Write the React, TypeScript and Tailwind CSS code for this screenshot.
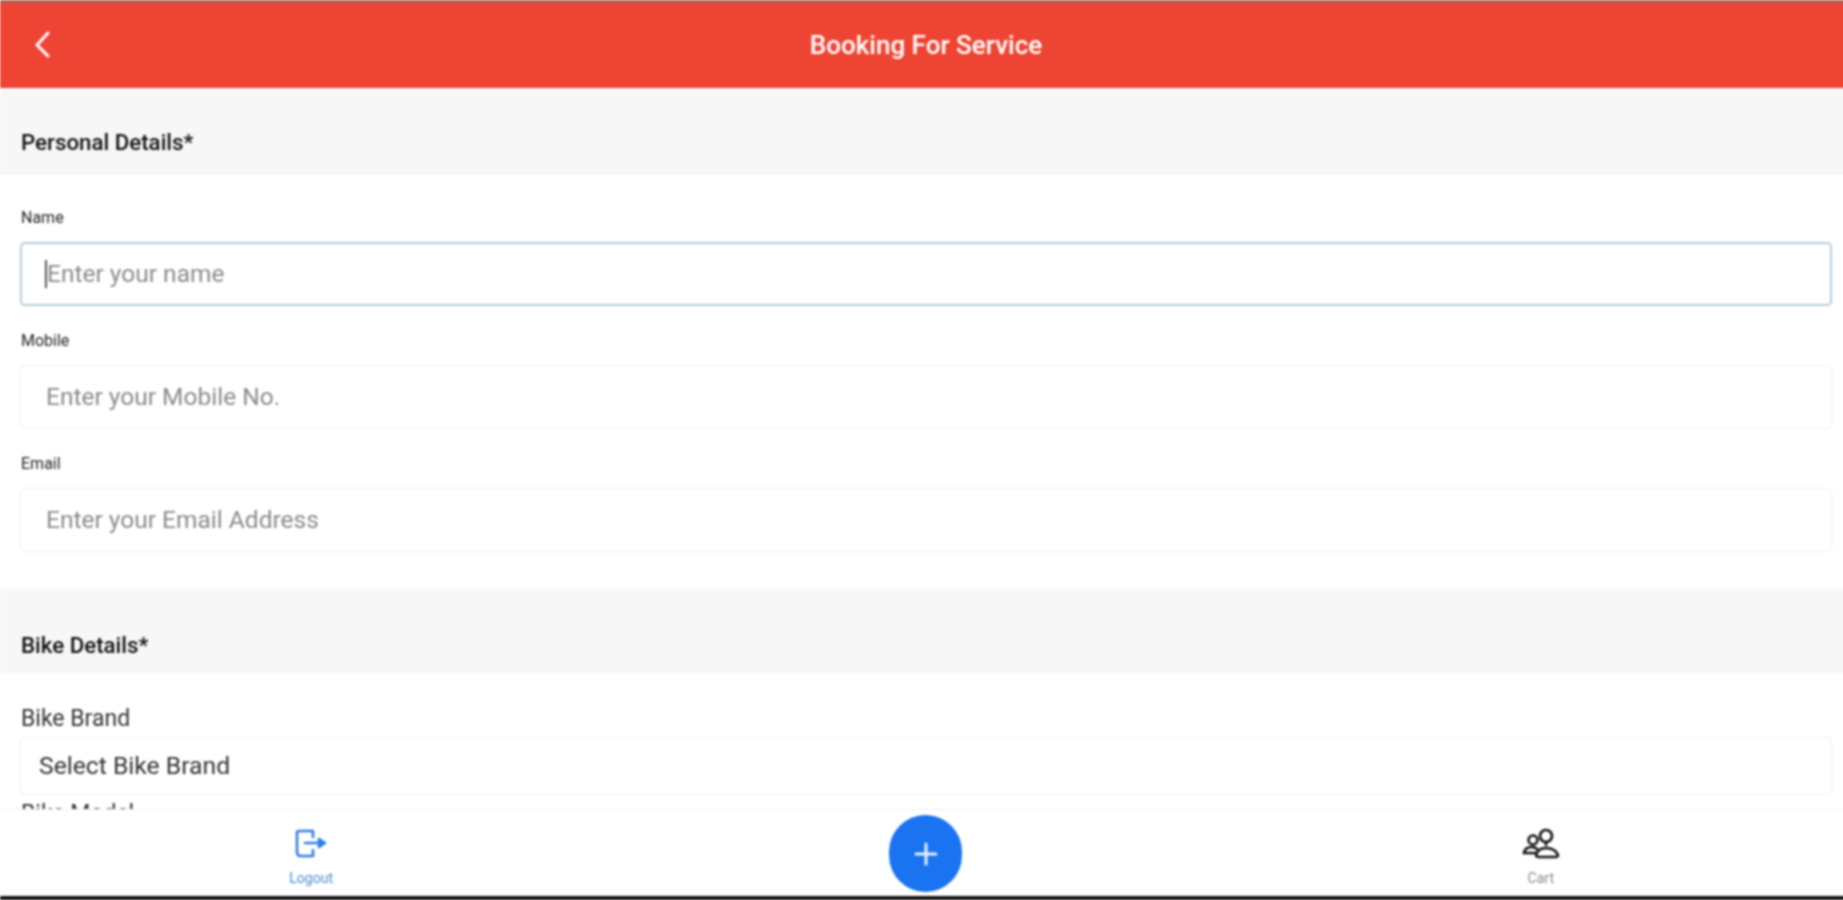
export default function App() {
  const Field = ({ label, placeholder, focused }: { label: string; placeholder: string; focused?: boolean }) => (
    <div>
      <div className="flex h-[59px] items-end pb-[14px] pl-[1px] text-[16px] leading-[20px] text-[#222]">{label}</div>
      <div
        className={
          focused
            ? "flex h-[64px] items-center rounded-[5px] border-2 border-[#b4ccd8] bg-white pl-[23px] text-[24.5px] text-[#8a8a8a]"
            : "flex h-[64px] items-center rounded-[5px] border border-[#f0f0f0] bg-white pl-[25px] text-[24.5px] text-[#8a8a8a]"
        }
      >
        {focused && <span className="h-[28px] w-[2px] bg-[#555]" />}
        {placeholder}
      </div>
    </div>
  );

  return (
    <div className="h-[900px] w-full overflow-hidden bg-white">
      <div className="flex h-[900px] w-[1852px] flex-col bg-white font-['Roboto',sans-serif] blur-[0.8px]">
        <header className="relative flex h-[88px] shrink-0 items-center justify-center border-t-4 border-[#bd5a4a] bg-[#ee4433] pb-[2px]">
          <svg className="absolute left-[32px] top-[26px]" width="22" height="30" viewBox="0 0 22 30" fill="none" stroke="white" strokeWidth="3" strokeLinecap="round" strokeLinejoin="round">
            <path d="M16 3 L5 15 L16 26" />
          </svg>
          <h1 className="text-[26px] font-medium text-white">Booking For Service</h1>
        </header>

        <main className="min-h-0 flex-1 overflow-hidden">
          <section className="flex h-[86px] items-end border-b border-[#efefef] bg-[#f7f7f7] px-[21px] pb-[18px]">
            <h2 className="text-[22.3px] font-medium leading-[26px] text-[#111]">Personal Details*</h2>
          </section>
          <div className="flex flex-col px-[20px] pt-[9px]">
            <Field label="Name" placeholder="Enter your name" focused />
            <Field label="Mobile" placeholder="Enter your Mobile No." />
            <Field label="Email" placeholder="Enter your Email Address" />
          </div>
          <section className="mt-[36px] flex h-[84px] items-end border-b border-[#efefef] bg-[#f7f7f7] px-[21px] pb-[13px]">
            <h2 className="text-[22.3px] font-medium leading-[26px] text-[#111]">Bike Details*</h2>
          </section>
          <div className="px-[20px] pt-[34px]">
            <div className="h-[26px] pl-[1px] text-[23px] leading-[26px] text-[#333]">Bike Brand</div>
            <div className="mt-[5px] flex h-[58px] items-center rounded-[5px] border border-[#eeeeee] bg-white pl-[18px] text-[24.7px] text-[#333]">
              Select Bike Brand
            </div>
            <div className="mt-[6px] pl-[1px] text-[23px] leading-[26px] text-[#333]">Bike Model</div>
          </div>
        </main>

        <nav className="grid h-[87px] shrink-0 grid-cols-3 border-t border-[#efefef] bg-white">
          <div className="flex flex-col items-center pl-[5px] pt-[18px]">
            <svg width="34" height="32" viewBox="0 0 34 32" fill="none" stroke="#2f7fe0" strokeWidth="2.6" strokeLinejoin="round" strokeLinecap="round">
              <path d="M19 9 V3 H5 Q3 3 3 5 V24 Q3 28 7 28 H19 V22" />
              <path d="M11 15 H28" />
              <path d="M25 11 L31 15 L25 19 Z" fill="#2f7fe0" />
            </svg>
            <span className="mt-[9px] text-[14px] leading-[18px] text-[#4a8bd8]">Logout</span>
          </div>
          <div className="flex justify-center pt-[5px]">
            <button className="flex h-[77px] w-[73px] items-center justify-center rounded-full bg-[#1a73f0]">
              <svg width="26" height="26" viewBox="0 0 26 26" stroke="#e6f0ff" strokeWidth="3" strokeLinecap="round">
                <path d="M13 3 V23 M3 13 H23" />
              </svg>
            </button>
          </div>
          <div className="flex flex-col items-center pr-[5px] pt-[18px]">
            <svg width="38" height="32" viewBox="0 0 38 32" fill="none" stroke="#111" strokeWidth="2.6" strokeLinecap="round" strokeLinejoin="round">
              <circle cx="11" cy="12" r="4.5" />
              <path d="M2 25 Q3 19 10 19 Q13 19 15 21" />
              <path d="M2 25 H13" />
              <circle cx="24" cy="8" r="6" />
              <path d="M24 15 V17" />
              <path d="M14 27 Q16 20 24 20 Q33 20 36 27 Q36 29 33 29 H17 Q14 29 14 27 Z" />
            </svg>
            <span className="mt-[9px] text-[14px] leading-[18px] text-[#888]">Cart</span>
          </div>
        </nav>
        <div className="h-[4px] shrink-0 bg-[#111]" />
      </div>
    </div>
  );
}
